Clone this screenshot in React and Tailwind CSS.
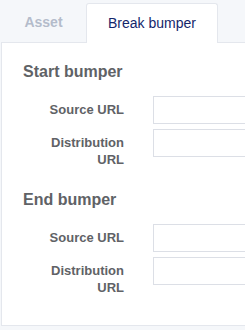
const sections = [
  { title: "Start bumper", fields: ["Source URL", "Distribution URL"] },
  { title: "End bumper", fields: ["Source URL", "Distribution URL"] },
];

const Field = ({ label }) => (
  <div className="flex items-start gap-[29px]">
    <label className="w-[101px] shrink-0 pt-[5px] text-right text-[13px] font-bold leading-[17px] text-[#606266]">
      {label}
    </label>
    <input
      type="text"
      className="h-[28px] w-[220px] shrink-0 border border-[#dcdfe6] bg-white outline-none"
    />
  </div>
);

export default function App() {
  return (
    <div
      className="min-h-[330px] w-full overflow-hidden bg-[#f5f7fa] pt-[3px] pl-px"
      style={{ fontFamily: '"Liberation Sans", Arial, sans-serif' }}
    >
      <div className="flex w-[420px]">
        <div className="flex h-[39px] w-[85px] items-center justify-center text-[14px] font-bold text-[#b4bccb]">
          Asset
        </div>
        <div className="relative z-10 -mb-px flex h-[40px] w-[132px] items-center justify-center rounded-t-[3px] border border-b-0 border-[#e4e7ed] bg-white text-[14px] text-[#14266b]">
          Break bumper
        </div>
      </div>
      <div className="w-[420px] border border-[#e4e7ed] bg-white px-[21px] pt-[19px] pb-[29px]">
        {sections.map((s, i) => (
          <div key={i} className={i > 0 ? "mt-[22px]" : ""}>
            <h3 className="mb-[14px] text-[16px] font-bold leading-[20px] text-[#606266]">
              {s.title}
            </h3>
            <div className="flex flex-col gap-[5px]">
              {s.fields.map((f) => (
                <Field key={f} label={f} />
              ))}
            </div>
          </div>
        ))}
      </div>
    </div>
  );
}
